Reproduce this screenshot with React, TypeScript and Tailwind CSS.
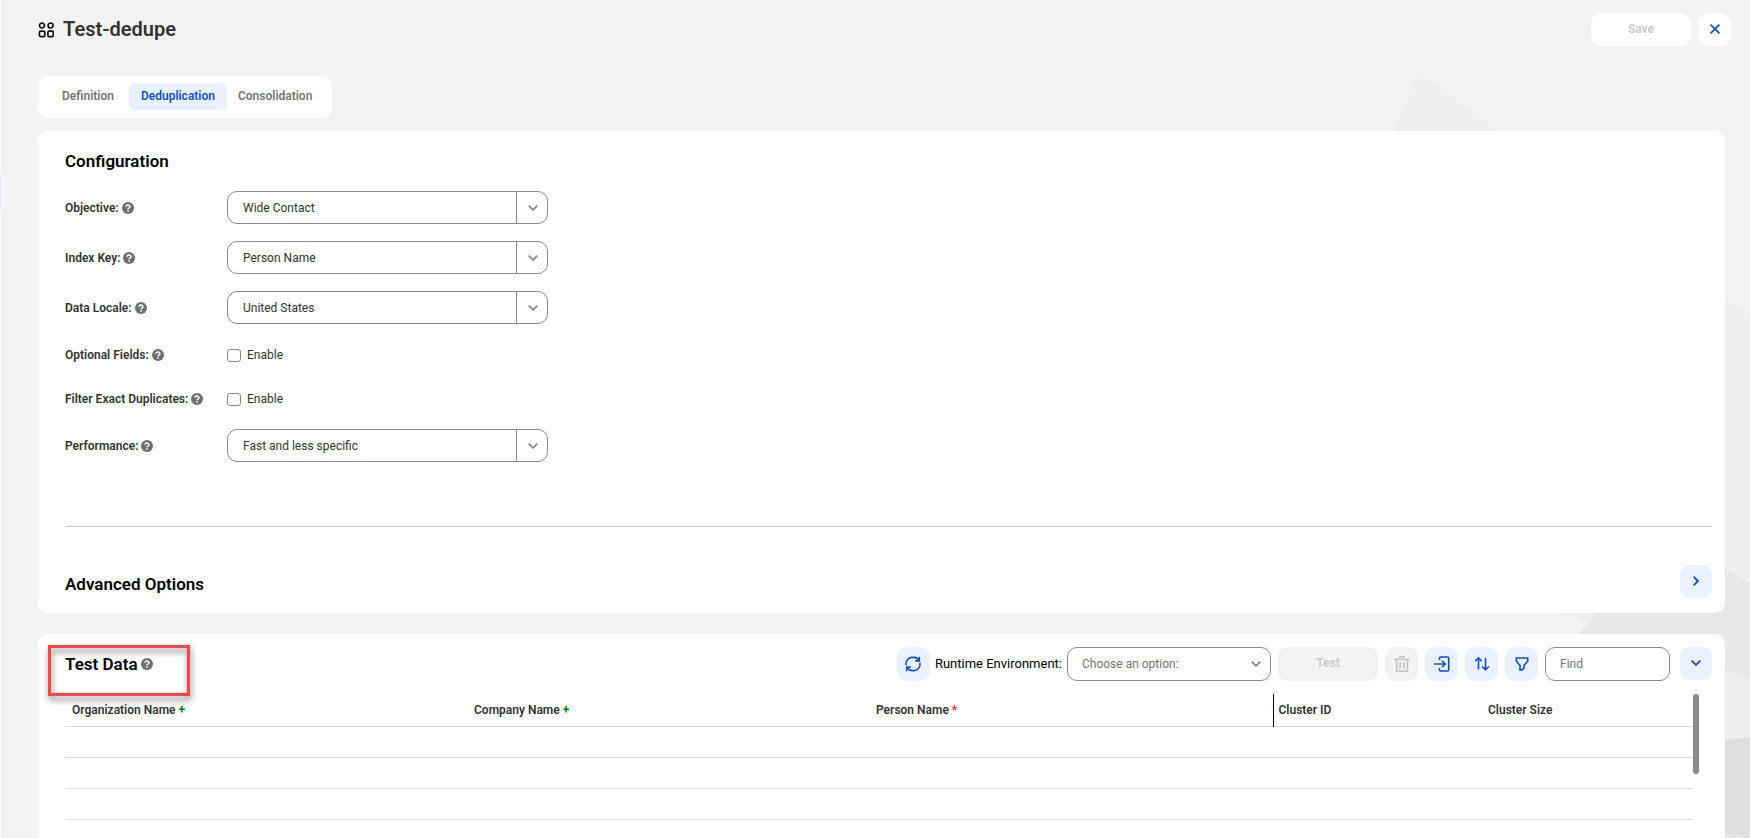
import type { ReactNode } from "react";

const HelpIcon = () => (
  <svg width="12" height="12" viewBox="0 0 12 12" className="shrink-0" aria-hidden="true">
    <circle cx="6" cy="6" r="6" fill="#6f6f6f" />
    <path d="M4.1 4.7a1.9 1.7 0 1 1 2.8 1.4q-.9.5-.9 1.2" fill="none" stroke="#fff" strokeWidth="1.5" />
    <rect x="5.2" y="8.2" width="1.6" height="1.5" fill="#fff" />
  </svg>
);

const Chevron = ({ className }: { className?: string }) => (
  <svg width="10" height="6" viewBox="0 0 10 6" className={className} aria-hidden="true">
    <path d="M.7.6 5 4.9 9.3.6" fill="none" stroke="currentColor" strokeWidth="1.8" />
  </svg>
);

const IconButton = ({ label, children }: { label: string; children: ReactNode }) => (
  <button
    type="button"
    aria-label={label}
    className="flex h-[34px] w-[33px] shrink-0 items-center justify-center rounded-[10px] bg-[#ebf2ff] text-[#0b4fcf]"
  >
    {children}
  </button>
);

const ToggleButton = ({ label, children }: { label: string; children: ReactNode }) => (
  <button
    type="button"
    aria-label={label}
    className="flex h-[33px] w-8 shrink-0 items-center justify-center rounded-[10px] bg-[#ebf2ff] pb-0.5 text-[#0b4fcf]"
  >
    {children}
  </button>
);

const Backdrop = () => (
  <svg
    width="370"
    height="838"
    viewBox="1380 0 370 838"
    className="absolute top-0 right-0 -z-10"
    aria-hidden="true"
  >
    <polygon points="1418,71 1750,316 1750,838 1380,560 1380,166" fill="#efefef" />
    <polygon points="1380,549 1559,613 1618,634 1380,634" fill="#f3f3f3" />
    <polygon points="1660,534 1750,583 1750,838 1579,838 1579,634" fill="#e7e7e7" />
    <polygon points="1700,662 1750,678 1750,838 1700,838" fill="#eeeeee" />
    <polygon points="1700,743 1750,737 1750,838 1700,838" fill="#dfdfdf" />
    <polygon points="1725,834 1750,838 1725,838" fill="#e9e9e9" />
  </svg>
);

const tabs = ["Definition", "Deduplication", "Consolidation"];

const Header = () => (
  <header className="flex h-[46px] items-end justify-between pr-[19px] pl-[38px]">
    <div className="flex h-[33px] items-center gap-[9px]">
      <svg width="16" height="16" viewBox="0 0 16 16" fill="none" stroke="#111" strokeWidth="1.7" aria-hidden="true">
        <circle cx="4" cy="3.5" r="2.5" />
        <circle cx="12.6" cy="3.5" r="2.5" />
        <rect x="1.4" y="9.2" width="5.4" height="5.4" rx="1.4" />
        <rect x="9.9" y="9.2" width="5.4" height="5.4" rx="1.4" />
      </svg>
      <h1 className="pb-0.5 text-[20px] leading-6 font-semibold text-[#333]">Test-dedupe</h1>
    </div>
    <div className="flex gap-[7px]">
      <button
        type="button"
        disabled
        className="h-[33px] w-[100px] rounded-[10px] bg-white pb-0.5 text-xs font-bold text-[#ccc]"
      >
        Save
      </button>
      <button
        type="button"
        aria-label="Close"
        className="flex h-[33px] w-[33px] items-center justify-center rounded-[10px] bg-white pb-0.5 text-[#0b4fcf]"
      >
        <svg width="10" height="10" viewBox="0 0 10 10" aria-hidden="true">
          <path d="m.6.6 8.8 8.8m0-8.8L.6 9.4" stroke="currentColor" strokeWidth="1.6" />
        </svg>
      </button>
    </div>
  </header>
);

const Tabs = () => (
  <nav className="mt-[30px] ml-[38px] flex h-[42px] w-[294px] items-center rounded-[10px] bg-white pb-px pl-3">
    {tabs.map((tab) => (
      <button
        key={tab}
        type="button"
        className={
          tab === "Deduplication"
            ? "mx-[3px] h-[27px] rounded-md bg-[#ebf2ff] px-3 pb-0.5 text-xs font-semibold text-[#0b4fcf]"
            : "h-[27px] px-3 pb-0.5 text-xs font-semibold text-[#757575] last:px-2"
        }
      >
        {tab}
      </button>
    ))}
  </nav>
);

const FieldLabel = ({ id, children }: { id: string; children: ReactNode }) => (
  <div className="flex w-[162px] shrink-0 items-center gap-[3px]">
    <label htmlFor={id} className="text-xs leading-4 font-semibold text-[#333]">
      {children}
    </label>
    <HelpIcon />
  </div>
);

const SelectField = ({ id, label, value }: { id: string; label: string; value: string }) => (
  <div className="flex h-[33px] items-center">
    <FieldLabel id={id}>{label}</FieldLabel>
    <div className="relative h-full w-[321px]">
      <select
        id={id}
        className="h-full w-full appearance-none rounded-[10px] border border-[#8b8b8b] bg-white pl-[15px] text-xs text-[#333]"
      >
        <option>{value}</option>
      </select>
      <span className="pointer-events-none absolute inset-y-0 right-0 flex w-8 items-center justify-center border-l border-[#8b8b8b]">
        <Chevron className="text-[#8b8b8b]" />
      </span>
    </div>
  </div>
);

const CheckField = ({ id, label }: { id: string; label: string }) => (
  <div className="flex h-4 items-center">
    <FieldLabel id={id}>{label}</FieldLabel>
    <input id={id} type="checkbox" className="h-[13px] w-[14px] appearance-none rounded-[3px] border border-[#8b8b8b] bg-white" />
    <label htmlFor={id} className="ml-1.5 text-xs leading-4 text-[#333]">
      Enable
    </label>
  </div>
);

const Configuration = () => (
  <section
    aria-labelledby="configuration"
    className="mt-[13px] mr-[25px] ml-[38px] rounded-[10px] bg-white pr-[13px] pb-[15px] pl-[27px]"
  >
    <h2 id="configuration" className="pt-5 text-[17px] leading-5 font-semibold text-black">
      Configuration
    </h2>
    <div className="mt-5 flex flex-col gap-[17px]">
      <SelectField id="objective" label="Objective:" value="Wide Contact" />
      <SelectField id="index-key" label="Index Key:" value="Person Name" />
      <SelectField id="data-locale" label="Data Locale:" value="United States" />
    </div>
    <div className="mt-[23px] mb-[22px] flex flex-col gap-7">
      <CheckField id="optional-fields" label="Optional Fields:" />
      <CheckField id="filter-duplicates" label="Filter Exact Duplicates:" />
    </div>
    <SelectField id="performance" label="Performance:" value="Fast and less specific" />
    <hr className="mt-16 border-[#c8c8c8]" />
    <div className="mt-[38px] flex items-center justify-between">
      <h2 className="pt-1 text-[17px] leading-5 font-semibold text-black">Advanced Options</h2>
      <ToggleButton label="Expand advanced options">
        <Chevron className="-rotate-90" />
      </ToggleButton>
    </div>
  </section>
);

const Toolbar = () => (
  <div className="flex items-center gap-[7px]">
    <IconButton label="Refresh">
      <svg width="16" height="16" viewBox="0 0 16 16" fill="none" stroke="currentColor" strokeWidth="1.6" aria-hidden="true">
        <path d="M1 9.2V7.5A6 6 0 0 1 7 1.4h2a6 6 0 0 1 5 3.2M15 6.8v1.7a6 6 0 0 1-6 6.1H7a6 6 0 0 1-5-3.2" />
        <path d="M14.3.8v4.1h-4M1.7 15.2v-4.1h4" />
      </svg>
    </IconButton>
    <label htmlFor="runtime" className="-mx-0.5 text-[13px] text-black">
      Runtime Environment:
    </label>
    <div className="relative h-[34px] w-[204px]">
      <select
        id="runtime"
        className="h-full w-full appearance-none rounded-[10px] border border-[#8b8b8b] bg-white pl-[14px] text-xs text-[#757575]"
      >
        <option>Choose an option:</option>
      </select>
      <Chevron className="pointer-events-none absolute top-3.5 right-2.5 text-[#8b8b8b]" />
    </div>
    <button
      type="button"
      disabled
      className="h-[34px] w-[100px] rounded-[10px] bg-[#f3f3f3] pb-0.5 text-xs font-bold text-[#ccc]"
    >
      Test
    </button>
    <button
      type="button"
      disabled
      aria-label="Delete"
      className="flex h-[34px] w-[33px] items-center justify-center rounded-[10px] bg-[#f3f3f3] text-[#c8c8c8]"
    >
      <svg width="16" height="16" viewBox="0 0 16 16" fill="none" stroke="currentColor" strokeWidth="1.7" aria-hidden="true">
        <path d="M.5 3.3h15M5 .9h6M2.6 4v11.1h10.8V4M6.2 6v6.5M9.8 6v6.5" />
      </svg>
    </button>
    <IconButton label="Import">
      <svg width="16" height="16" viewBox="0 0 16 16" fill="none" stroke="currentColor" strokeWidth="1.6" aria-hidden="true">
        <path d="M5.5 4V2q0-1 1-1h7.2q1 0 1 1v12q0 1-1 1H6.5q-1 0-1-1v-2M0 8h11M8 4.8 11.2 8 8 11.2" />
      </svg>
    </IconButton>
    <IconButton label="Sort">
      <svg width="16" height="16" viewBox="0 0 16 16" fill="none" stroke="currentColor" strokeWidth="1.6" aria-hidden="true">
        <path d="M4.5 13.5V2M1.2 5.2l3.3-3.3 3.3 3.3M11.5 2v11.5M8.2 10.5l3.3 3.3 3.3-3.3" />
      </svg>
    </IconButton>
    <IconButton label="Filter">
      <svg width="14" height="14" viewBox="0 0 14 14" fill="none" stroke="currentColor" strokeWidth="1.6" aria-hidden="true">
        <path d="M1.3 1h11.4v3.2L9 8.4v2.8l-1.8 1.7H5V8.4L1.3 4.2z" />
      </svg>
    </IconButton>
    <input
      type="text"
      aria-label="Find"
      placeholder="Find"
      className="h-[34px] w-[125px] rounded-[10px] border border-[#8b8b8b] bg-white px-[14px] text-xs placeholder:text-[#757575]"
    />
    <div className="ml-[3px] self-start">
      <ToggleButton label="Collapse test data">
        <Chevron />
      </ToggleButton>
    </div>
  </div>
);

const TestTable = () => (
  <div className="mt-[13px] mr-[13px] flex items-start">
    <table className="flex-1 table-fixed border-collapse text-left text-xs text-[#333]">
      <thead>
        <tr className="h-8 border-b border-[#dcdcdc]">
          <th className="w-[402px] pl-[7px] font-semibold">
            Organization Name <span className="font-bold text-[#008000]">+</span>
          </th>
          <th className="w-[402px] pl-[7px] font-semibold">
            Company Name <span className="font-bold text-[#008000]">+</span>
          </th>
          <th className="w-[404px] border-r border-black pl-[7px] font-semibold">
            Person Name <span className="text-[#ff2020]">*</span>
          </th>
          <th className="w-[210px] pl-[5px] font-semibold">Cluster ID</th>
          <th className="pl-[5px] font-semibold">Cluster Size</th>
        </tr>
      </thead>
      <tbody>
        {[1, 2, 3, 4].map((row) => (
          <tr key={row} className="h-[31px] border-b border-[#dcdcdc]">
            <td colSpan={5} />
          </tr>
        ))}
      </tbody>
    </table>
    <div className="h-20 w-1.5 rounded-full bg-[#8b8b8b]" />
  </div>
);

const TestData = () => (
  <section
    aria-labelledby="test-data"
    className="relative mt-[21px] mr-[25px] ml-[38px] rounded-t-[10px] bg-white pt-[13px] pr-[13px] pb-10 pl-[27px]"
  >
    <div className="flex items-center justify-between">
      <div className="flex items-center gap-[3px]">
        <h2 id="test-data" className="text-[17px] leading-5 font-semibold text-black">
          Test Data
        </h2>
        <HelpIcon />
      </div>
      <Toolbar />
    </div>
    <TestTable />
    <div className="pointer-events-none absolute top-[11px] left-[10px] h-[51px] w-[142px] border-3 border-[#fb4444] drop-shadow-[1px_4px_3px_rgba(0,0,0,0.5)]" />
  </section>
);

const App = () => (
  <main className="relative isolate h-screen overflow-hidden bg-[#f3f3f3] font-['Roboto',sans-serif]">
    <Backdrop />
    <div className="absolute inset-y-0 left-0 w-px bg-white pt-[175px]">
      <div className="h-[34px] bg-[#dfe8ff]" />
    </div>
    <Header />
    <Tabs />
    <Configuration />
    <TestData />
  </main>
);

export default App;
